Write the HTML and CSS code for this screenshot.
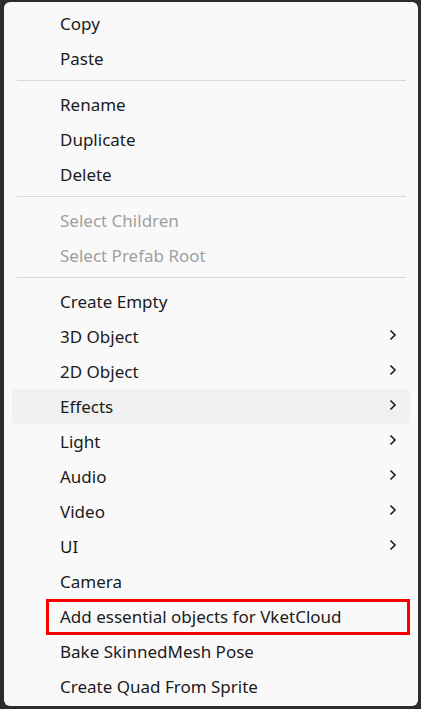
FILE: index.html
```html
<!DOCTYPE html>
<html>
<head>
<meta charset="utf-8">
<link rel="stylesheet" href="styles.css">
</head>
<body>
<div class="menu">
  <div class="item">Copy</div>
  <div class="item">Paste</div>
  <div class="sep"></div>
  <div class="item">Rename</div>
  <div class="item">Duplicate</div>
  <div class="item">Delete</div>
  <div class="sep"></div>
  <div class="item disabled">Select Children</div>
  <div class="item disabled">Select Prefab Root</div>
  <div class="sep"></div>
  <div class="item">Create Empty</div>
  <div class="item sub">3D Object<svg class="chev" viewBox="0 0 8 12"><path d="M1.5 1.5 L6 6 L1.5 10.5"/></svg></div>
  <div class="item sub">2D Object<svg class="chev" viewBox="0 0 8 12"><path d="M1.5 1.5 L6 6 L1.5 10.5"/></svg></div>
  <div class="item sub hover">Effects<svg class="chev" viewBox="0 0 8 12"><path d="M1.5 1.5 L6 6 L1.5 10.5"/></svg></div>
  <div class="item sub">Light<svg class="chev" viewBox="0 0 8 12"><path d="M1.5 1.5 L6 6 L1.5 10.5"/></svg></div>
  <div class="item sub">Audio<svg class="chev" viewBox="0 0 8 12"><path d="M1.5 1.5 L6 6 L1.5 10.5"/></svg></div>
  <div class="item sub">Video<svg class="chev" viewBox="0 0 8 12"><path d="M1.5 1.5 L6 6 L1.5 10.5"/></svg></div>
  <div class="item sub">UI<svg class="chev" viewBox="0 0 8 12"><path d="M1.5 1.5 L6 6 L1.5 10.5"/></svg></div>
  <div class="item">Camera</div>
  <div class="item marked">Add essential objects for VketCloud</div>
  <div class="item">Bake SkinnedMesh Pose</div>
  <div class="item">Create Quad From Sprite</div>
</div>
</body>
</html>
```
FILE: styles.css
```css
html, body {
  margin: 0;
  padding: 0;
  background: #2c2c2c;
  height: 100%;
  overflow: hidden;
}
body {
  padding: 2px 3px 0 4px;
  box-sizing: border-box;
  font-family: "Noto Sans", "Open Sans", sans-serif;
}
.menu {
  width: 414px;
  box-sizing: border-box;
  background: #f9f9f9;
  border-radius: 6px;
  padding: 4px 0 2px;
  display: flex;
  flex-direction: column;
}
.item {
  position: relative;
  height: 35px;
  margin: 0 8px;
  padding: 0 13px 0 48px;
  display: flex;
  align-items: center;
  font-size: 17px;
  color: #1b1b1b;
  border-radius: 4px;
}
.item.disabled {
  color: #a0a0a0;
}
.item.hover {
  background: #f0f0f0;
}
.chev {
  width: 8px;
  height: 12px;
  margin-left: auto;
  margin-top: -4px;
  fill: none;
  stroke: #1b1b1b;
  stroke-width: 1.6;
}
.sep {
  height: 1px;
  background: #d7d7d7;
  margin: 4px 12px 6px 13px;
}
.marked::after {
  content: "";
  position: absolute;
  left: 34px;
  right: 0;
  top: 0;
  bottom: -1px;
  border: 3px solid #ff0000;
}
```
